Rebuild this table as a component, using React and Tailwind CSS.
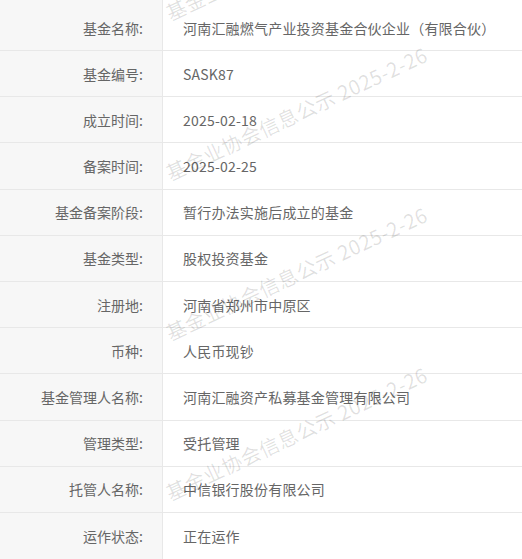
import React from "react";

const rows = [
  ["基金名称:", "河南汇融燃气产业投资基金合伙企业（有限合伙）"],
  ["基金编号:", "SASK87"],
  ["成立时间:", "2025-02-18"],
  ["备案时间:", "2025-02-25"],
  ["基金备案阶段:", "暂行办法实施后成立的基金"],
  ["基金类型:", "股权投资基金"],
  ["注册地:", "河南省郑州市中原区"],
  ["币种:", "人民币现钞"],
  ["基金管理人名称:", "河南汇融资产私募基金管理有限公司"],
  ["管理类型:", "受托管理"],
  ["托管人名称:", "中信银行股份有限公司"],
  ["运作状态:", "正在运作"],
];

const wmTops = [4, 164, 324, 484];

export default function App() {
  return (
    <div
      className="relative w-[522px] h-[559px] overflow-hidden bg-white text-[14px] text-[#666]"
      style={{ fontFamily: '"Noto Sans CJK SC", "Noto Sans", sans-serif' }}
    >
      <div className="flex flex-col">
        {rows.map(([label, value], i) => (
          <div
            key={label}
            className={
              (i === 0 ? "h-[51px] " : "h-[46.2px] ") +
              (i === rows.length - 1 ? "" : "border-b border-[#e8e8e8] ") +
              "flex box-border"
            }
          >
            <div
              className={
                (i === 0 ? "pt-[5px] " : "") +
                "w-[163px] shrink-0 bg-[#f7f7f7] border-r border-[#e8e8e8] flex items-center justify-end pr-[19px] leading-none"
              }
            >
              {label}
            </div>
            <div
              className={
                (i === 0 ? "pt-[5px] " : "") +
                "flex-1 flex items-center pl-[20px] leading-none tracking-[0.2px]"
              }
            >
              {value}
            </div>
          </div>
        ))}
      </div>
      {wmTops.map((t) => (
        <span
          key={t}
          className="absolute left-[167px] whitespace-nowrap text-[20px] leading-[20px] tracking-[0.5px] text-[#000]/[0.12] pointer-events-none select-none origin-left -rotate-[25deg]"
          style={{ top: t }}
        >
          基金业协会信息公示 2025-2-26
        </span>
      ))}
    </div>
  );
}
